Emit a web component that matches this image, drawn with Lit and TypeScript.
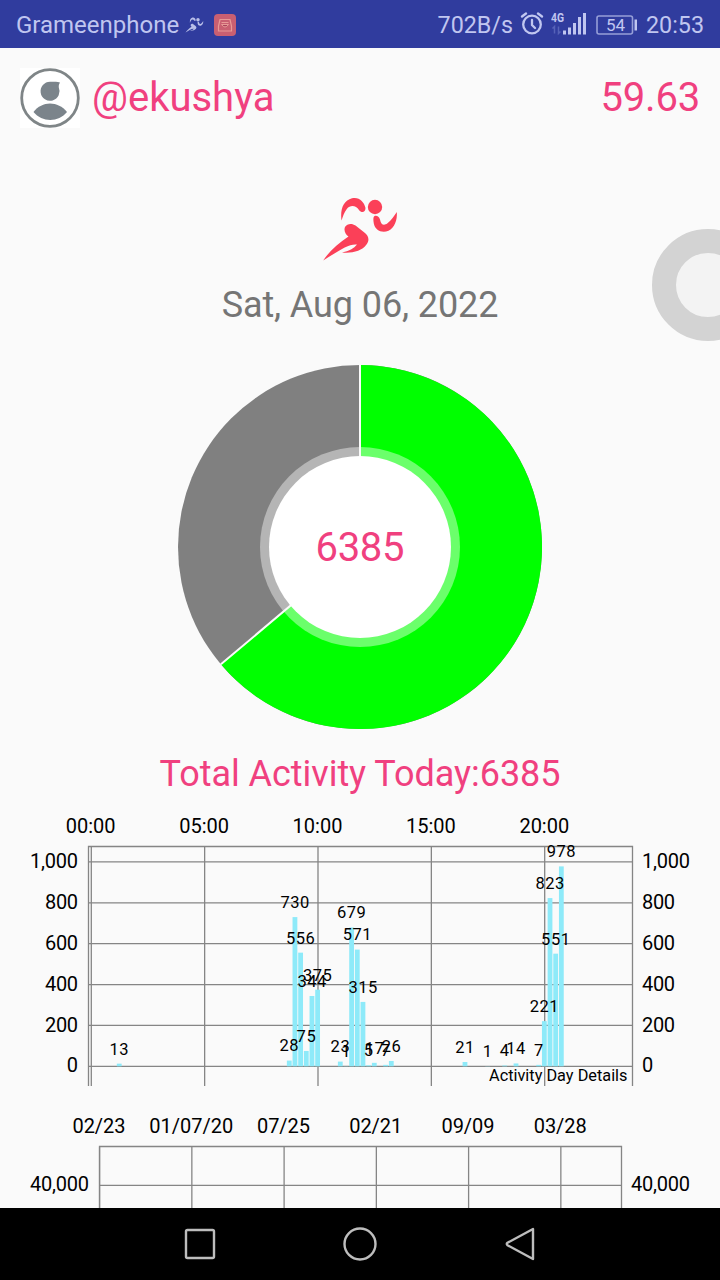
import { LitElement, html, svg, css } from "lit";
import { customElement } from "lit/decorators.js";

const runner = svg`
  <path d="M20.500 23.500C19 12 22.500 3.500 31 1.300C38 -.4 43 4.500 44.500 11C44.500 15.500 40.500 16.300 38 13C35 8.500 29.500 7.500 25.800 12C23 15.500 22 19.500 20.500 23.500Z"/>
  <circle cx="54" cy="10" r="7.200"/>
  <path d="M53.500 19C56 18.300 58 19.500 59 22.500C60 27.500 62.500 29.300 66.500 26.300C70.500 23 73 19 75.800 15C76.500 23 73.500 31 67.500 33.800C60.500 36.500 54 33 52.800 26.500C52.200 23 52 20 53.500 19Z"/>
  <path d="M24 30C26 26.500 31 26 34.500 28.500L44 36C48 39.500 48.500 43.500 45.500 47.500C41 54 31 56.500 21 55.500C28 54 33 51.500 36 47.500C28 46.500 19 53 2.200 63.500C8 54.500 17 46.500 27.500 39.500C24.500 37.500 22.500 33.500 24 30Z"/>`;

const readings: [number, number][] = [
  [5, 13], [35, 28], [36, 730], [37, 556], [38, 75], [39, 344], [40, 375],
  [44, 23], [45, 1], [46, 679], [47, 571], [48, 315], [49, 5], [50, 17],
  [52, 7], [53, 26], [66, 21], [70, 1], [73, 4], [75, 14], [79, 7],
  [80, 221], [81, 823], [82, 551], [83, 978],
];

@customElement("status-bar")
class StatusBar extends LitElement {
  static styles = css`
    :host { display: flex; justify-content: space-between; align-items: center; box-sizing: border-box;
      height: 48px; padding: 2px 16px 0; background: #303c9e; color: #c0c6f0; font-size: 24px; line-height: 46px; }
    .side { display: flex; align-items: center; height: 46px; }
    .right { font-size: 23.300px; }
    svg { display: block; }
    .run { margin-left: 6px; }
    .app { margin-left: 10px; }
    .alarm { margin: 0 0 2px 7px; }
    .signal { margin: 0 0 2px 7px; }
    .battery { margin: 0 8px 0 9px; }
  `;
  render() {
    return html`
      <div class="side">
        <span>Grameenphone</span>
        <svg class="run" width="19" height="18" viewBox="0 0 79 64" fill="#b9bfe8">${runner}</svg>
        <svg class="app" width="22" height="22" viewBox="0 0 22 22">
          <rect width="22" height="22" rx="4" fill="#c95f71"/>
          <path d="M6 5.500h10l1.500 6.500v5h-13v-5z" fill="none" stroke="#e89a96" stroke-width="1.200"/>
          <path d="M7.500 8.500h7M7.500 10.500q3.500 5 7 0z" fill="#a9445c" stroke="#e89a96"/>
        </svg>
      </div>
      <div class="side right">
        <span>702B/s</span>
        <svg class="alarm" width="24" height="24" viewBox="0 0 24 24" fill="none" stroke="#c0c6f0" stroke-width="2.300" stroke-linecap="round">
          <circle cx="12" cy="12.500" r="8.800"/><path d="M12 8v5l3 3M2 4.500l4-3M22 4.500l-4-3"/>
        </svg>
        <svg class="signal" width="36" height="28" viewBox="0 -2 36 28">
          <text x="0" y="10" font-family="Roboto" font-size="12.500" font-weight="700" fill="#c0c6f0" textLength="13" lengthAdjust="spacingAndGlyphs">4G</text>
          <path d="M3.500 21.500v-7l-2 2M7.500 14.500v7l2-2" fill="none" stroke="#5662b8" stroke-width="1.500"/>
          <path d="M12 22.500v-4h3v4zM17 22.500v-7h3v7zM22 22.500V11h3v11.500zM27 22.500V5h3v17.500zM32 22.500V1h3v21.500z" fill="#c0c6f0"/>
        </svg>
        <svg class="battery" width="42" height="20" viewBox="0 0 42 20">
          <rect x="1" y="1" width="35.500" height="18" rx="2" fill="none" stroke="#969fd8" stroke-width="1.600"/>
          <rect x="38.500" y="4.500" width="2.500" height="11" fill="#c0c6f0"/>
          <text x="19.500" y="16" text-anchor="middle" font-family="Roboto" font-size="17" fill="#c0c6f0">54</text>
        </svg>
        <span>20:53</span>
      </div>`;
  }
}

@customElement("goal-donut")
class GoalDonut extends LitElement {
  static styles = css`
    :host { display: flex; justify-content: center; height: 364px; }
    svg { display: block; }
    text { font: 40px Roboto, sans-serif; fill: #f0407f; text-anchor: middle; }
  `;
  render() {
    return html`<svg width="364" height="364" viewBox="0 0 364 364">
      <circle cx="182" cy="182" r="182" fill="#808080"/>
      <path d="M182 182V0A182 182 0 1 1 42.900 299.300Z" fill="#00ff00"/>
      <circle cx="182" cy="182" r="100" fill="#fff" fill-opacity=".42"/>
      <path d="M182 0V182L42.900 299.300" fill="none" stroke="#fafafa" stroke-width="2"/>
      <circle cx="182" cy="182" r="91" fill="#fff"/>
      <text x="182" y="196.400" textLength="89">6385</text>
    </svg>`;
  }
}

const chartText = css`
  :host { display: block; }
  svg { display: block; }
  text { font: 20px Roboto, sans-serif; fill: #000; }
  .mid { text-anchor: middle; }
  .end { text-anchor: end; }
  .value { font-size: 16.500px; letter-spacing: .5px; text-anchor: middle; }
  .caption { font-size: 16.300px; text-anchor: end; }
  .grid { stroke: #858585; stroke-width: 1.300; fill: none; }
`;

@customElement("day-chart")
class DayChart extends LitElement {
  static styles = chartText;
  render() {
    const zero = 256.3;
    const step = 40.88;
    const centre = (i: number) => 90.9 + i * 5.668;
    const rows = [0, 1, 2, 3, 4, 5];
    const hours = ["00:00", "05:00", "10:00", "15:00", "20:00"];
    return html`<svg width="720" height="290" viewBox="0 0 720 290">
      ${hours.map((h, i) => svg`
        <path class="grid" d="M${91.3 + i * 113.35} 36.500V276"/>
        <text class="mid" x=${90.7 + i * 113.4} y="23">${h}</text>`)}
      ${rows.map((r) => svg`
        <path class="grid" d="M88 ${zero - r * step}H633"/>
        <text class="end" x="78" y=${zero - r * step + 6.1} textLength=${r === 5 ? 48 : r ? 33 : 11}>${(r * 200).toLocaleString("en-US")}</text>
        <text x="642" y=${zero - r * step + 6.1} textLength=${r === 5 ? 48 : r ? 33 : 11}>${(r * 200).toLocaleString("en-US")}</text>`)}
      ${readings.map(([i, v]) => svg`
        <rect x=${centre(i) - 2.4} y=${zero - (v * step) / 200} width="4.800" height=${(v * step) / 200} fill="#8eeaf9"/>`)}
      <path class="grid" d="M88.500 276V36.500H632.500V276"/>
      ${readings.map(([i, v]) => svg`
        <text class="value" x=${centre(i) + 0.1} y=${zero - (v * step) / 200 - 9.1}>${v}</text>`)}
      <text class="caption" x="627.500" y="271" textLength="138.500">Activity Day Details</text>
    </svg>`;
  }
}

@customElement("history-chart")
class HistoryChart extends LitElement {
  static styles = chartText;
  render() {
    const dates = ["02/23", "01/07/20", "07/25", "02/21", "09/09", "03/28"];
    return html`<svg width="720" height="108" viewBox="0 0 720 108">
      ${dates.map((d, i) => svg`
        <path class="grid" d="M${99.6 + i * 92.25} 46.500V108"/>
        <text class="mid" x=${99 + i * 92.25} y="33">${d}</text>`)}
      <path class="grid" d="M99.500 108V46.500H621.500V108M99.500 85.400H621.500"/>
      <text class="end" x="89" y="91.300" textLength="59">40,000</text>
      <text x="631" y="91.300" textLength="59">40,000</text>
    </svg>`;
  }
}

@customElement("app-root")
class AppRoot extends LitElement {
  static styles = css`
    :host { display: flex; flex-direction: column; position: relative; width: 720px; height: 1280px;
      overflow: hidden; background: #fafafa; font-family: Roboto, sans-serif; }
    svg { display: block; }
    header { display: flex; align-items: center; height: 60px; padding: 20px 20px 0; color: #f0407f; font-size: 40px; line-height: 60px; }
    .avatar { margin-right: 12px; }
    .score { margin-left: auto; letter-spacing: -.2px; }
    .logo { align-self: center; flex: none; margin-top: 69px; }
    .date { margin-top: 19px; height: 50px; line-height: 50px; text-align: center; font-size: 36px; letter-spacing: -.1px; color: #757575; }
    goal-donut { margin-top: 35px; }
    .total { margin-top: 20px; height: 50px; line-height: 50px; text-align: center; font-size: 36px; letter-spacing: -.04px; color: #f0407f; }
    day-chart { margin-top: 11px; height: 290px; }
    nav { display: flex; justify-content: center; align-items: center; gap: 120px; flex: none; height: 72px; margin-top: auto; background: #000; }
    .assist { position: absolute; right: -44px; top: 229px; width: 64px; height: 64px; border: 24px solid #d3d3d3; border-radius: 50%; background: #f3f3f3; }
  `;
  render() {
    return html`
      <status-bar></status-bar>
      <header>
        <svg class="avatar" width="60" height="60" viewBox="0 0 60 60">
          <rect width="60" height="60" fill="#fff"/>
          <circle cx="30" cy="30" r="28.300" fill="none" stroke="#7f8587" stroke-width="2.800"/>
          <path d="M40 14.500C36.500 13.700 33 13.800 30 13.800A9.500 9.500 0 1 0 38.800 19.500C38.600 17.500 39 16 40 14.500Z" fill="#7b848b"/>
          <path d="M13.500 44C22 32.500 38 32.500 47 44C38.500 54.500 22 54.500 13.500 44Z" fill="#7b848b"/>
        </svg>
        <span>@ekushya</span><span class="score">59.63</span>
      </header>
      <svg class="logo" width="79" height="64" viewBox="0 0 79 64" fill="#fb4058">${runner}</svg>
      <div class="date">Sat, Aug 06, 2022</div>
      <goal-donut></goal-donut>
      <div class="total">Total Activity Today:6385</div>
      <day-chart></day-chart>
      <history-chart></history-chart>
      <div class="assist"></div>
      <nav>
        <svg width="40" height="40" viewBox="0 0 40 40" fill="none" stroke="#bdbdbd" stroke-width="2.400"><rect x="6" y="6" width="28" height="28" rx="1.500"/></svg>
        <svg width="40" height="40" viewBox="0 0 40 40" fill="none" stroke="#bdbdbd" stroke-width="2.400"><circle cx="20" cy="20" r="15.500"/></svg>
        <svg width="40" height="40" viewBox="0 0 40 40" fill="none" stroke="#bdbdbd" stroke-width="2.400" stroke-linejoin="round"><path d="M33 5V35L7.500 21.200Q6 20 7.500 18.800Z"/></svg>
      </nav>`;
  }
}
